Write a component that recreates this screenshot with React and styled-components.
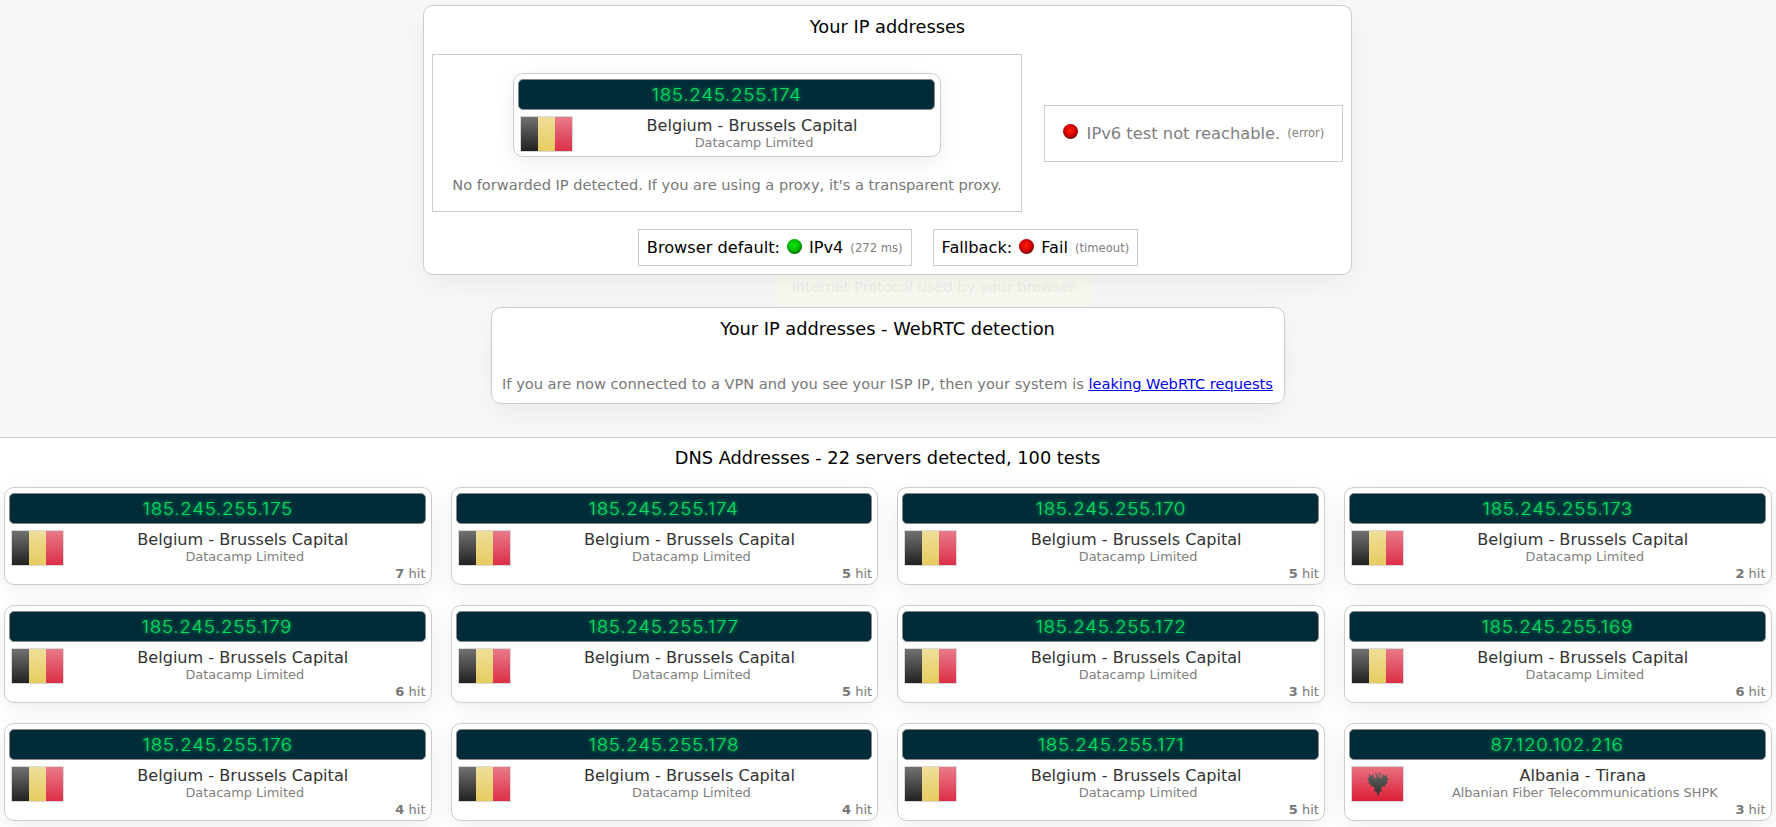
import React from 'react'
import styled, { createGlobalStyle } from 'styled-components'

const GlobalStyle = createGlobalStyle`
  html, body {
    margin: 0;
    padding: 0;
    background: #f8f8f8;
    overflow: hidden;
  }
  * {
    box-sizing: border-box;
  }
  body {
    font-family: "DejaVu Sans", Verdana, sans-serif;
    color: #000;
  }
`

const TopArea = styled.div`
  position: relative;
  height: 437px;
  padding: 5px 1px 0 0;
  overflow: hidden;
`

const Panel = styled.section`
  position: relative;
  z-index: 1;
  width: ${p => p.$width}px;
  height: ${p => p.$height}px;
  margin: ${p => p.$margin || '0 auto'};
  background: #fff;
  border: 1px solid #ccc;
  border-radius: 10px;
  box-shadow: 0 10px 30px rgba(0, 0, 0, 0.06);
`

const PanelTitle = styled.h2`
  margin: 0;
  height: 48px;
  line-height: 41px;
  font-size: 17.8px;
  font-weight: 400;
  text-align: center;
`

const MainRow = styled.div`
  display: flex;
  align-items: center;
  padding-left: 8px;
`

const ForwardBox = styled.div`
  width: 590px;
  height: 158px;
  padding-top: 18px;
  border: 1px solid #ccc;
  display: flex;
  flex-direction: column;
  align-items: center;
`

const ForwardNote = styled.p`
  margin: 19px 0 0;
  font-size: 14.6px;
  color: #777;
  white-space: nowrap;
`

const StatusBox = styled.div`
  margin-left: 22px;
  width: 299px;
  height: 57px;
  border: 1px solid #ccc;
  display: flex;
  align-items: center;
  justify-content: center;
  font-size: 16.3px;
  color: #808080;
`

const Led = styled.span`
  display: inline-block;
  flex: none;
  width: 15px;
  height: 15px;
  margin: 0 ${p => p.$gap || 9}px 3px ${p => p.$lead || 0}px;
  border-radius: 50%;
  background: radial-gradient(
    circle at 47% 42%,
    ${p => (p.$on ? '#10e810, #00b800 50%, #0c4a0c 78%, #555' : '#ff2000, #d00000 50%, #4a0c0c 78%, #555')}
  );
`

const Small = styled.small`
  margin-left: 7px;
  font-size: 11.6px;
  color: #808080;
`

const ProtocolRow = styled.div`
  display: flex;
  justify-content: center;
  gap: 21px;
  margin-top: 17px;
  padding-left: 1px;
`

const ProtocolBox = styled.div`
  height: 37px;
  padding: 0 8px;
  border: 1px solid #ccc;
  display: flex;
  align-items: center;
  font-size: 16.2px;
  white-space: nowrap;
`

const Hint = styled.div`
  position: absolute;
  left: 775px;
  top: 260px;
  width: 317px;
  height: 46px;
  padding-top: 18px;
  text-align: center;
  font-size: 14.6px;
  color: #eeeeea;
  background: #fbfaf2;
  border-radius: 6px;
  white-space: nowrap;
`

const LeakNote = styled.p`
  margin: 19px 0 0;
  font-size: 14.6px;
  color: #777;
  text-align: center;
  white-space: nowrap;
`

const LeakLink = styled.a`
  color: #0000ee;
`

const DnsArea = styled.div`
  height: 390px;
  background: #fff;
  border-top: 1px solid #ccc;
  padding: 0 5px 0 4px;
`

const DnsTitle = styled.h2`
  margin: 0;
  height: 49px;
  padding-top: 9px;
  line-height: 21px;
  font-size: 17.8px;
  font-weight: 400;
  text-align: center;
`

const DnsGrid = styled.div`
  display: grid;
  grid-template-columns: repeat(4, 427.5px);
  column-gap: 19.2px;
  row-gap: 20px;
`

const Card = styled.div`
  width: ${p => (p.$compact ? '428px' : 'auto')};
  height: ${p => (p.$compact ? '84px' : '98px')};
  padding: 5px 5px 5px 4px;
  background: #fff;
  border: 1px solid #ccc;
  border-radius: 10px;
  box-shadow: 0 6px 22px rgba(0, 0, 0, 0.07);
`

const IpBar = styled.div`
  height: 31px;
  line-height: 31px;
  background: #002b38;
  border: 1px solid #888;
  border-radius: 5px;
  text-align: center;
  font-family: Inter, "DejaVu Sans", sans-serif;
  font-size: 17px;
  font-weight: 300;
  letter-spacing: 0.6px;
  color: #00e060;
  text-shadow: 0 0 4px rgba(0, 224, 96, 0.75);
`

const IpText = styled.span`
  display: inline-block;
  transform: scaleX(1.11);
`

const InfoRow = styled.div`
  display: flex;
  margin-top: 6px;
  padding-left: 2px;
`

const FlagBox = styled.div`
  position: relative;
  flex: none;
  width: 53px;
  height: 36px;
  border: 1px solid #d8d8d8;
  overflow: hidden;
  display: flex;

  &::after {
    content: '';
    position: absolute;
    inset: 0;
    background: linear-gradient(rgba(255, 255, 255, 0.36), rgba(255, 255, 255, 0.16) 55%, rgba(255, 255, 255, 0));
  }
`

const Stripe = styled.span`
  flex: 1;
  background: ${p => p.$color};
`

const EagleIcon = styled.svg`
  position: absolute;
  left: 14.5px;
  top: 4px;
`

const Where = styled.div`
  flex: 1;
  text-align: center;
`

const Country = styled.div`
  margin-top: 1px;
  padding-right: 4px;
  font-size: 16.1px;
  line-height: 18px;
  color: #333;
`

const Isp = styled.div`
  font-size: 12.9px;
  line-height: 16px;
  color: #808080;
`

const Hits = styled.div`
  text-align: right;
  font-size: 13px;
  line-height: 15px;
  color: #777;

  & > b {
    font-weight: 700;
  }
`

const FlagBelgium = () => (
  <FlagBox>
    <Stripe $color="#222" />
    <Stripe $color="#e6cc60" />
    <Stripe $color="#dc3048" />
  </FlagBox>
)

const FlagAlbania = () => (
  <FlagBox>
    <Stripe $color="#dc2038" />
    <EagleIcon width="22" height="26" viewBox="0 0 22 26">
      <path
        fill="#222"
        d="M8 1 L10 2 L10.5 6 L11 7 L11.5 6 L12 2 L14 1 L13 2.5 L14 3 L13 5 L13.5 8 L15 6 L16 3 L18 5 L20 3 L20 7 L22 7 L20 10 L21 12 L18 13 L19 15 L16 15 L15 17 L14 16 L14 18 L15.5 21 L13 20 L11 25 L9 20 L6.5 21 L8 18 L8 16 L7 17 L6 15 L3 15 L4 13 L1 12 L2 10 L0 7 L2 7 L2 3 L4 5 L6 3 L7 6 L8.5 8 L9 5 L8 3 L9 2.5 Z"
      />
    </EagleIcon>
  </FlagBox>
)

const flags = { be: FlagBelgium, al: FlagAlbania }

const IpCard = ({ ip, flag = 'be', place, isp, hits, compact }) => {
  const Flag = flags[flag]
  return (
    <Card $compact={compact}>
      <IpBar><IpText>{ip}</IpText></IpBar>
      <InfoRow>
        <Flag />
        <Where>
          <Country>{place}</Country>
          <Isp>{isp}</Isp>
        </Where>
      </InfoRow>
      {hits && (
        <Hits>
          <b>{hits}</b> hit
        </Hits>
      )}
    </Card>
  )
}

const brussels = { place: 'Belgium - Brussels Capital', isp: 'Datacamp Limited' }

const servers = [
  { ip: '185.245.255.175', hits: 7, ...brussels },
  { ip: '185.245.255.174', hits: 5, ...brussels },
  { ip: '185.245.255.170', hits: 5, ...brussels },
  { ip: '185.245.255.173', hits: 2, ...brussels },
  { ip: '185.245.255.179', hits: 6, ...brussels },
  { ip: '185.245.255.177', hits: 5, ...brussels },
  { ip: '185.245.255.172', hits: 3, ...brussels },
  { ip: '185.245.255.169', hits: 6, ...brussels },
  { ip: '185.245.255.176', hits: 4, ...brussels },
  { ip: '185.245.255.178', hits: 4, ...brussels },
  { ip: '185.245.255.171', hits: 5, ...brussels },
  { ip: '87.120.102.216', hits: 3, flag: 'al', place: 'Albania - Tirana', isp: 'Albanian Fiber Telecommunications SHPK' },
]

export default function App() {
  return (
    <>
      <GlobalStyle />
      <TopArea>
        <Panel $width={929} $height={270}>
          <PanelTitle>Your IP addresses</PanelTitle>
          <MainRow>
            <ForwardBox>
              <IpCard compact ip="185.245.255.174" {...brussels} />
              <ForwardNote>No forwarded IP detected. If you are using a proxy, it's a transparent proxy.</ForwardNote>
            </ForwardBox>
            <StatusBox>
              <Led />
              IPv6 test not reachable. <Small>(error)</Small>
            </StatusBox>
          </MainRow>
          <ProtocolRow>
            <ProtocolBox>
              Browser default:<Led $on $lead={7} $gap={7} />IPv4 <Small>(272 ms)</Small>
            </ProtocolBox>
            <ProtocolBox>
              Fallback:<Led $lead={7} $gap={7} />Fail <Small>(timeout)</Small>
            </ProtocolBox>
          </ProtocolRow>
        </Panel>
        <Hint>Internet Protocol used by your browser</Hint>
        <Panel $width={794} $height={97} $margin="32px auto 0">
          <PanelTitle>Your IP addresses - WebRTC detection</PanelTitle>
          <LeakNote>
            If you are now connected to a VPN and you see your ISP IP, then your system is{' '}
            <LeakLink href="#leak">leaking WebRTC requests</LeakLink>
          </LeakNote>
        </Panel>
      </TopArea>
      <DnsArea>
        <DnsTitle>DNS Addresses - 22 servers detected, 100 tests</DnsTitle>
        <DnsGrid>
          {servers.map(item => (
            <IpCard key={item.ip} {...item} />
          ))}
        </DnsGrid>
      </DnsArea>
    </>
  )
}
